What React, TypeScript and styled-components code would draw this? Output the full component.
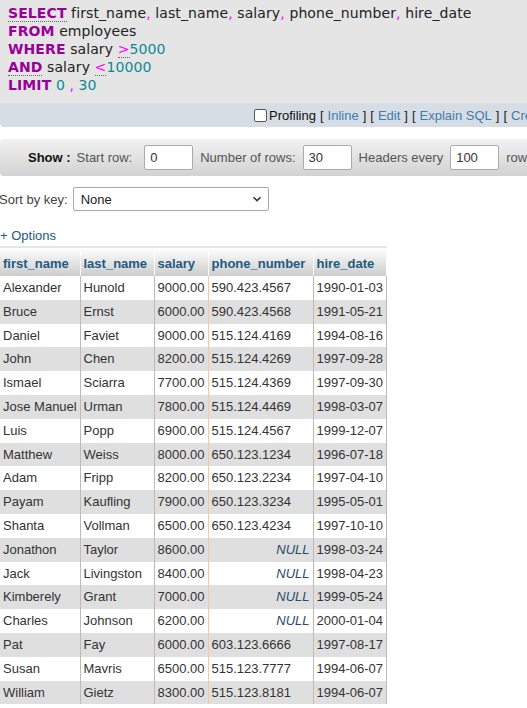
import React from "react";
import styled, { createGlobalStyle } from "styled-components";

const GlobalStyle = createGlobalStyle`
  html, body {
    margin: 0;
    padding: 0;
    background: #fff;
    overflow: hidden;
  }
  body {
    font-family: "Liberation Sans", Arial, sans-serif;
    font-size: 13px;
    color: #444;
  }
`;

type Row = [string, string, string, string | null, string];

const rows: Row[] = [
  ["Alexander", "Hunold", "9000.00", "590.423.4567", "1990-01-03"],
  ["Bruce", "Ernst", "6000.00", "590.423.4568", "1991-05-21"],
  ["Daniel", "Faviet", "9000.00", "515.124.4169", "1994-08-16"],
  ["John", "Chen", "8200.00", "515.124.4269", "1997-09-28"],
  ["Ismael", "Sciarra", "7700.00", "515.124.4369", "1997-09-30"],
  ["Jose Manuel", "Urman", "7800.00", "515.124.4469", "1998-03-07"],
  ["Luis", "Popp", "6900.00", "515.124.4567", "1999-12-07"],
  ["Matthew", "Weiss", "8000.00", "650.123.1234", "1996-07-18"],
  ["Adam", "Fripp", "8200.00", "650.123.2234", "1997-04-10"],
  ["Payam", "Kaufling", "7900.00", "650.123.3234", "1995-05-01"],
  ["Shanta", "Vollman", "6500.00", "650.123.4234", "1997-10-10"],
  ["Jonathon", "Taylor", "8600.00", null, "1998-03-24"],
  ["Jack", "Livingston", "8400.00", null, "1998-04-23"],
  ["Kimberely", "Grant", "7000.00", null, "1999-05-24"],
  ["Charles", "Johnson", "6200.00", null, "2000-01-04"],
  ["Pat", "Fay", "6000.00", "603.123.6666", "1997-08-17"],
  ["Susan", "Mavris", "6500.00", "515.123.7777", "1994-06-07"],
  ["William", "Gietz", "8300.00", "515.123.8181", "1994-06-07"],
];

const columns = [
  { name: "first_name", width: 80 },
  { name: "last_name", width: 74 },
  { name: "salary", width: 54 },
  { name: "phone_number", width: 105 },
  { name: "hire_date", width: 73 },
];

export default function App() {
  return (
    <>
      <GlobalStyle />
      <SqlBox>
        <SqlLine>
          <Kw $doc>SELECT</Kw> first_name<Op>,</Op> last_name<Op>,</Op> salary<Op>,</Op>{" "}
          phone_number<Op>,</Op> hire_date
        </SqlLine>
        <SqlLine>
          <Kw>FROM</Kw> employees
        </SqlLine>
        <SqlLine>
          <Kw>WHERE</Kw> salary <Op $doc>&gt;</Op>
          <Num>5000</Num>
        </SqlLine>
        <SqlLine>
          <Kw $doc>AND</Kw> salary <Op $doc>&lt;</Op>
          <Num>10000</Num>
        </SqlLine>
        <SqlLine>
          <Kw>LIMIT</Kw> <Num>0</Num> <Op>,</Op> <Num>30</Num>
        </SqlLine>
      </SqlBox>

      <ToolsBar>
        <Tools>
          <CheckBox />
          <span>Profiling</span>
          <Bracket>[</Bracket>
          <Link>Inline</Link>
          <Bracket>]</Bracket>
          <Bracket>[</Bracket>
          <Link>Edit</Link>
          <Bracket>]</Bracket>
          <Bracket>[</Bracket>
          <Link>Explain SQL</Link>
          <Bracket>]</Bracket>
          <Bracket>[</Bracket>
          <Link>Create PHP code</Link>
          <Bracket>]</Bracket>
          <Bracket>[</Bracket>
          <Link>Refresh</Link>
          <Bracket>]</Bracket>
        </Tools>
      </ToolsBar>

      <NavBar>
        <ShowLabel>Show :</ShowLabel>
        <NavLabel>Start row:</NavLabel>
        <NavInput $lead defaultValue="0" />
        <NavLabel>Number of rows:</NavLabel>
        <NavInput defaultValue="30" />
        <NavLabel>Headers every</NavLabel>
        <NavInput defaultValue="100" />
        <NavLabel>rows</NavLabel>
      </NavBar>

      <SortRow>
        <span>Sort by key:</span>
        <SortSelect>
          <span>None</span>
          <svg width="10" height="10" viewBox="0 0 10 10">
            <path d="M1.5 3.2 L5 6.6 L8.5 3.2" fill="none" stroke="#333" strokeWidth="1.5" />
          </svg>
        </SortSelect>
      </SortRow>

      <Options>+ Options</Options>

      <DataTable>
        <colgroup>
          {columns.map((c) => (
            <col key={c.name} style={{ width: c.width }} />
          ))}
        </colgroup>
        <thead>
          <tr>
            {columns.map((c) => (
              <Th key={c.name}>{c.name}</Th>
            ))}
          </tr>
        </thead>
        <tbody>
          {rows.map((r, i) => (
            <Tr key={i} $even={i % 2 === 1}>
              <Td>{r[0]}</Td>
              <Td>{r[1]}</Td>
              <Td $right $marked>
                {r[2]}
              </Td>
              {r[3] === null ? (
                <Td $right>
                  <Null>NULL</Null>
                </Td>
              ) : (
                <Td>{r[3]}</Td>
              )}
              <Td>{r[4]}</Td>
            </Tr>
          ))}
        </tbody>
      </DataTable>
    </>
  );
}

const SqlBox = styled.div`
  background: #e5e5e5;
  padding: 4px 8px 9px;
  font-family: "DejaVu Sans", Verdana, sans-serif;
  font-size: 14px;
  line-height: 18px;
  letter-spacing: 0.1px;
  color: #222;
  white-space: nowrap;
`;

const SqlLine = styled.div``;

const Kw = styled.span<{ $doc?: boolean }>`
  color: #990099;
  font-weight: bold;
  border-bottom: ${(p) => (p.$doc ? "1px dotted #666" : "none")};
`;

const Op = styled.span<{ $doc?: boolean }>`
  color: #ff00ff;
  border-bottom: ${(p) => (p.$doc ? "1px dotted #666" : "none")};
`;

const Num = styled.span`
  color: #0b8a94;
`;

const ToolsBar = styled.div`
  background: #d6dde4;
  height: 24px;
  border-bottom-left-radius: 4px;
  display: flex;
  align-items: center;
  overflow: hidden;
`;

const Tools = styled.div`
  display: flex;
  align-items: center;
  gap: 4px;
  margin-left: 254px;
  white-space: nowrap;
  color: #111;
  font-size: 13px;
`;

const CheckBox = styled.span`
  width: 11px;
  height: 11px;
  border: 1px solid #555;
  border-radius: 2px;
  background: #fff;
  margin-right: -2px;
`;

const Bracket = styled.span`
  color: #222;
`;

const Link = styled.span`
  color: #3f7cb0;
`;

const NavBar = styled.div`
  margin-top: 12px;
  height: 37px;
  display: flex;
  align-items: center;
  padding-left: 28px;
  gap: 5px;
  white-space: nowrap;
  border-radius: 4px 0 0 4px;
  background: linear-gradient(to bottom, #f2f2f2, #d2d2d2);
  overflow: hidden;
`;

const ShowLabel = styled.span`
  font-weight: bold;
  color: #111;
  margin-right: 1px;
`;

const NavLabel = styled.span`
  color: #555;
`;

const NavInput = styled.input<{ $lead?: boolean }>`
  box-sizing: border-box;
  width: 49px;
  height: 25px;
  border: 1px solid #aaa;
  border-radius: 2px;
  padding: 0 5px;
  font-family: "Liberation Sans", Arial, sans-serif;
  font-size: 13px;
  color: #333;
  margin: 0 2px 0 ${(p) => (p.$lead ? "7px" : "2px")};
`;

const SortRow = styled.div`
  margin-top: 11px;
  display: flex;
  align-items: center;
  gap: 5px;
  margin-left: -1px;
  color: #444;
`;

const SortSelect = styled.div`
  box-sizing: border-box;
  width: 196px;
  height: 24px;
  border: 1px solid #aaa;
  border-radius: 2px;
  background: #fff;
  display: flex;
  align-items: center;
  justify-content: space-between;
  padding: 0 6px 0 7px;
  color: #222;
`;

const Options = styled.div`
  margin-top: 17px;
  color: #235a81;
  line-height: 16px;
`;

const DataTable = styled.table`
  margin-top: 2px;
  border-collapse: collapse;
  table-layout: fixed;
  width: 386px;
  font-size: 13px;
`;

const Th = styled.th`
  text-align: left;
  vertical-align: bottom;
  font-weight: bold;
  color: #235a81;
  padding: 0 3px 5px;
  height: 23px;
  background: linear-gradient(to bottom, #ffffff, #cccccc);
  border-top: 2px solid #e6e6e6;
  border-right: 1px solid #fff;
  white-space: nowrap;
  overflow: hidden;
`;

const Tr = styled.tr<{ $even: boolean }>`
  background: ${(p) => (p.$even ? "#dfdfdf" : "#ffffff")};
`;

const Td = styled.td<{ $right?: boolean; $marked?: boolean }>`
  padding: 3px 3px;
  line-height: 17.8px;
  color: #333;
  text-align: ${(p) => (p.$right ? "right" : "left")};
  border-right: 1px solid ${(p) => (p.$marked ? "#f5c99c" : "#bbbbbb")};
  white-space: nowrap;
  overflow: hidden;
`;

const Null = styled.span`
  font-style: italic;
  color: #2b4a6a;
`;
